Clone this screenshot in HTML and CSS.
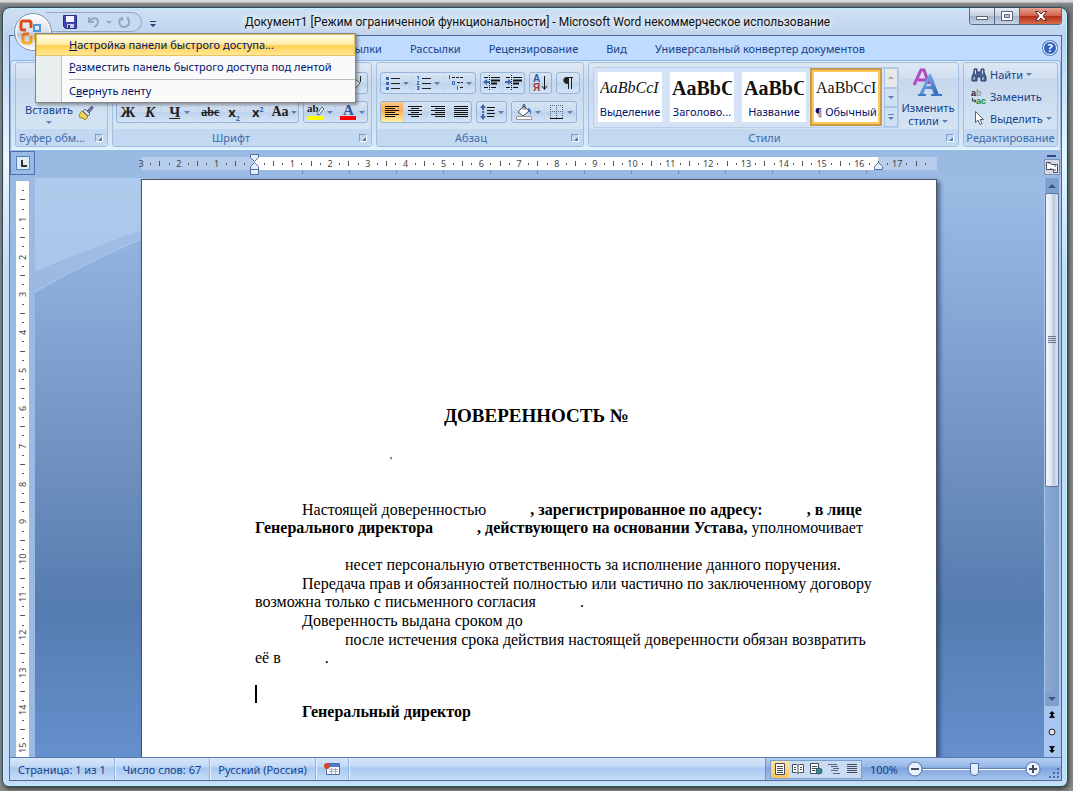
FILE: index.html
```
<!DOCTYPE html>
<html lang="ru">
<head>
  <meta charset="UTF-8" />
  <meta name="viewport" content="width=device-width, initial-scale=1.0"/>
  <title>Документ1 - Microsoft Word</title>
  <link rel="stylesheet" href="styles.css">
</head>
<body>
<div class="window">

  <header class="titlebar">
    <button class="office" aria-label="Кнопка Office">
      <svg width="40" height="40" viewBox="0 0 40 40">
        <defs>
          <linearGradient id="orb" x1="0" y1="0" x2="0" y2="1">
            <stop offset="0" stop-color="#fff"/><stop offset=".5" stop-color="#d9dfe8"/>
            <stop offset=".55" stop-color="#b9c4d3"/><stop offset="1" stop-color="#fff"/>
          </linearGradient>
          <linearGradient id="flame" x1="0" y1="0" x2="0" y2="1">
            <stop offset="0" stop-color="#e86a1c"/><stop offset="1" stop-color="#f5b623"/>
          </linearGradient>
        </defs>
        <circle cx="20" cy="20" r="18.500" fill="url(#orb)" stroke="#7f93b2"/>
        <circle cx="20" cy="20" r="17" fill="none" stroke="#fff"/>
        <g fill="none" stroke-width="3">
          <path d="M13 18h-3q-2 0-2-2v-5q0-2 2-2h6q2 0 2 2v5" stroke="#dc4a20"/>
          <path d="M21 13h6v6h-6z" stroke="#4a9bd8" stroke-width="2"/>
          <path d="M16 22h-4q-2 0-2 2v5q0 2 2 2h4q2 0 2-2v-5" stroke="url(#flame)"/>
          <path d="M22 23h4v4h-4z" stroke="#e9b840" stroke-width="2"/>
        </g>
      </svg>
    </button>
    <div class="quick">
      <button aria-label="Сохранить">
        <svg width="16" height="16" viewBox="0 0 16 16">
          <path d="M1.500 1.500h13v13h-11l-2-2z" fill="#3f46b0" stroke="#2a2f86"/>
          <path d="M4 2h8v6H4z" fill="#f4f6ff"/><path d="M5 10h7v4H5z" fill="#c9cdec"/><path d="M6 11h2v3H6z" fill="#2a2f86"/>
        </svg>
      </button>
      <button aria-label="Отменить">
        <svg width="16" height="16" viewBox="0 0 16 16" fill="none" stroke="#93a9c9" stroke-width="2">
          <path d="M3 3v5h5M3 8c3-5 9-5 9 0 0 3-2 4-4 5"/>
        </svg>
      </button>
      <i class="arrow pale"></i>
      <button aria-label="Повторить">
        <svg width="16" height="16" viewBox="0 0 16 16" fill="none" stroke="#93a9c9" stroke-width="2">
          <path d="M5 4C2 6 3 13 8 13s7-6 3-9M6 3v4M12 3v3"/>
        </svg>
      </button>
    </div>
    <button class="customize" aria-label="Настройка панели"><i class="arrow"></i></button>
    <h1>Документ1 [Режим ограниченной функциональности] - Microsoft Word некоммерческое использование</h1>
    <div class="window-buttons">
      <button aria-label="Свернуть"><svg width="14" height="12" viewBox="0 0 14 12"><path d="M1.500 6.500h11v3h-11z" fill="#fff" stroke="#56657c"/></svg></button>
      <button aria-label="Развернуть"><svg width="14" height="12" viewBox="0 0 14 12"><path d="M1.500 1.500h11v9h-11z" fill="#fff" stroke="#56657c"/><path d="M4.500 4.500h5v3h-5z" fill="#b8c7dd" stroke="#56657c"/></svg></button>
      <button class="close" aria-label="Закрыть"><svg width="14" height="12" viewBox="0 0 14 12"><path d="M1.500 1.500h3l2.500 2.500 2.500-2.500h3L9 6l3.500 4.500h-3L7 8l-2.500 2.500h-3L5 6z" fill="#fff" stroke="#5f2a2a"/></svg></button>
    </div>
  </header>

  <div class="client">
    <nav class="tabs">
      <a href="#">Ссылки</a>
      <a href="#">Рассылки</a>
      <a href="#">Рецензирование</a>
      <a href="#">Вид</a>
      <a href="#">Универсальный конвертер документов</a>
      <button class="help" aria-label="Справка">?</button>
    </nav>

    <div class="ribbon">
      <section class="group clipboard">
        <div class="group-body">
          <button class="paste">Вставить<i class="arrow"></i></button>
          <button class="brush" aria-label="Формат по образцу">
            <svg width="16" height="16" viewBox="0 0 16 16">
              <path d="M14 1l1 2-4 5-2-2z" fill="#6d7fae" stroke="#4a5888"/>
              <path d="M7 4l5 5-2 2-5-5z" fill="#d8deea" stroke="#6a6f80"/>
              <path d="M4 6l6 6-3 3-1-2-1 1-1-2-2 1-1-3z" fill="#f0d860" stroke="#a88a2a"/>
            </svg>
          </button>
        </div>
        <h2>Буфер обм...<button class="launcher" aria-label="Буфер обмена"></button></h2>
      </section>

      <section class="group font">
        <div class="group-body">
          <div class="row end">
            <div class="set"><button class="b24" aria-label="Очистить формат">
              <svg width="18" height="18" viewBox="0 0 18 18"><path d="M3 13l6-8 5 4-6 7H5z" fill="#fff" stroke="#56657c"/><path d="M14.500 2v6" stroke="#222"/></svg>
            </button></div>
          </div>
          <div class="row spread">
            <div class="set">
              <button class="b22 letter"><b>Ж</b></button>
              <button class="b22 letter"><b><i>К</i></b></button>
              <button class="b40 letter"><b><u>Ч</u></b><i class="arrow"></i></button>
              <button class="b24 small-letter"><s>abc</s></button>
              <button class="b24 letter sans"><b>x<sub>2</sub></b></button>
              <button class="b24 letter sans"><b>x<sup>2</sup></b></button>
              <button class="b28 letter bold-aa">Aa<i class="arrow"></i></button>
            </div>
            <div class="set">
              <button class="b32" aria-label="Цвет выделения текста">
                <svg width="18" height="18" viewBox="0 0 18 18"><text x="0" y="9" class="glyph">ab</text><path d="M10 11l5-7 2 2-5 6z" fill="#f4f4f4" stroke="#56657c"/><path d="M1 13h16v4H1z" fill="#ff0"/></svg>
                <i class="arrow"></i>
              </button>
              <button class="b32" aria-label="Цвет текста">
                <svg width="18" height="18" viewBox="0 0 18 18"><text x="4" y="12" class="glyph big">A</text><path d="M1 13h16v4H1z" fill="#f00"/></svg>
                <i class="arrow"></i>
              </button>
            </div>
          </div>
        </div>
        <h2>Шрифт<button class="launcher" aria-label="Шрифт"></button></h2>
      </section>

      <section class="group paragraph">
        <div class="group-body">
          <div class="row">
            <div class="set">
              <button class="b32" aria-label="Маркеры"><svg width="16" height="16" viewBox="0 0 16 16"><path d="M6 3.500h9M6 8.500h9M6 13.500h9" stroke="#222"/><path d="M1 2h3v3H1zM1 7h3v3H1zM1 12h3v3H1z" fill="#3c66b4"/></svg><i class="arrow"></i></button>
              <button class="b32" aria-label="Нумерация"><svg width="16" height="16" viewBox="0 0 16 16"><path d="M6 3.500h9M6 8.500h9M6 13.500h9" stroke="#222"/><path d="M1 1.500h1.500v3M1 6.500h2L1 9.500h2.500M1 11.500h2v3H1m0-1.500h2" stroke="#3c66b4" fill="none"/></svg><i class="arrow"></i></button>
              <button class="b32" aria-label="Многоуровневый список"><svg width="16" height="16" viewBox="0 0 16 16"><path d="M4 2.500h11M9 7.500h6M12 12.500h3" stroke="#222" stroke-dasharray="3 1"/><path d="M1.500 0v4M4.500 6.500h2v3h-2zM9.500 11v4" stroke="#3c66b4" fill="none"/></svg><i class="arrow"></i></button>
            </div>
            <div class="set">
              <button class="b22" aria-label="Уменьшить отступ"><svg width="18" height="16" viewBox="0 0 18 16"><path d="M1 2.500h4M8 2.500h9M1 12.500h4M8 12.500h5" stroke="#111"/><path d="M8 5.500h9M8 8.500h6" stroke="#111" stroke-width="2"/><path d="M6.500 0v16" stroke="#111" stroke-dasharray="1 1"/><path d="M0 7l4-3v2h3v2H4v2z" fill="#3c66b4"/></svg></button>
              <button class="b22" aria-label="Увеличить отступ"><svg width="18" height="16" viewBox="0 0 18 16"><path d="M1 2.500h4M8 2.500h9M1 12.500h4M8 12.500h5" stroke="#111"/><path d="M8 5.500h9M8 8.500h6" stroke="#111" stroke-width="2"/><path d="M6.500 0v16" stroke="#111" stroke-dasharray="1 1"/><path d="M7 7L3 4v2H0v2h3v2z" fill="#3c66b4"/></svg></button>
            </div>
            <div class="set">
              <button class="b22" aria-label="Сортировка"><svg width="18" height="18" viewBox="0 0 18 18"><text x="1" y="8" class="glyph sort">А</text><text x="1" y="17" class="glyph sort red">Я</text><path d="M12.500 2v13M10 12l2.500 3.500L15 12" stroke="#111" fill="none"/></svg></button>
            </div>
            <div class="set">
              <button class="b22" aria-label="Знаки абзаца"><svg width="14" height="14" viewBox="0 0 14 14"><path d="M6 1h6v1h-1v11h-1V2H8v11H7V8C1 8 1 1 6 1z" fill="#222"/></svg></button>
            </div>
          </div>
          <div class="row">
            <div class="set">
              <button class="b22 active" aria-label="По левому краю"><svg width="16" height="14" viewBox="0 0 16 14"><path d="M1 1.500h14M1 3.500h10M1 5.500h14M1 7.500h10M1 9.500h14M1 11.500h10" stroke="#111"/></svg></button>
              <button class="b22" aria-label="По центру"><svg width="16" height="14" viewBox="0 0 16 14"><path d="M1 1.500h14M4 3.500h8M1 5.500h14M4 7.500h8M1 9.500h14M4 11.500h8" stroke="#111"/></svg></button>
              <button class="b24" aria-label="По правому краю"><svg width="16" height="14" viewBox="0 0 16 14"><path d="M1 1.500h14M5 3.500h10M1 5.500h14M5 7.500h10M1 9.500h14M5 11.500h10" stroke="#111"/></svg></button>
              <button class="b22" aria-label="По ширине"><svg width="16" height="14" viewBox="0 0 16 14"><path d="M1 1.500h14M1 3.500h14M1 5.500h14M1 7.500h14M1 9.500h14M1 11.500h14" stroke="#111"/></svg></button>
            </div>
            <div class="set">
              <button class="b28" aria-label="Междустрочный интервал"><svg width="16" height="16" viewBox="0 0 16 16"><path d="M7 3.500h8M7 6.500h7M7 9.500h8M7 12.500h7" stroke="#111"/><path d="M3 0l3 4H4v2H2V4H0zM3 16l3-4H4v-2H2v2H0zM2 7h2v2H2z" fill="#3c66b4"/></svg><i class="arrow"></i></button>
            </div>
            <div class="set">
              <button class="b32" aria-label="Заливка"><svg width="18" height="18" viewBox="0 0 18 18"><path d="M3 9l6-6 5 5-6 5z" fill="#fff" stroke="#444c5c"/><path d="M8 6V2q2-2 2 1v4" stroke="#444c5c" fill="none"/><path d="M13 5q4 1 3 7-1-4-3-4z" fill="#3c66b4"/><path d="M1.500 13.500h15v3h-15z" fill="#fff" stroke="#999"/></svg><i class="arrow"></i></button>
              <button class="b32" aria-label="Границы"><svg width="16" height="16" viewBox="0 0 16 16"><path d="M1 1.500h13M1 7.500h13M1.500 1v13M7.500 1v13M13.500 1v13" stroke="#56657c" stroke-dasharray="1 1"/><path d="M1 14.500h13" stroke="#111"/></svg><i class="arrow"></i></button>
            </div>
          </div>
        </div>
        <h2>Абзац<button class="launcher" aria-label="Абзац"></button></h2>
      </section>

      <section class="group styles">
        <div class="group-body">
          <div class="gallery">
            <button class="style"><span class="sample italic">AaBbCcI</span><span>Выделение</span></button>
            <button class="style"><span class="sample heading">AaBbC</span><span>Заголово...</span></button>
            <button class="style"><span class="sample heading">AaBbC</span><span>Название</span></button>
            <button class="style selected"><span class="sample">AaBbCcI</span><span>¶ Обычный</span></button>
            <div class="gallery-scroll">
              <button aria-label="Вверх" disabled><i class="arrow up"></i></button>
              <button aria-label="Вниз"><i class="arrow"></i></button>
              <button aria-label="Все стили" class="more"><i class="arrow"></i></button>
            </div>
          </div>
          <button class="change">
            <svg width="32" height="32" viewBox="0 0 32 32">
              <defs><linearGradient id="blueA" x1="0" y1="0" x2="1" y2="1"><stop offset="0" stop-color="#8fc0f0"/><stop offset="1" stop-color="#2c63b8"/></linearGradient></defs>
              <path d="M2 18L9 3h3l5 14M6 13h8" fill="none" stroke="#b04cc0" stroke-width="3"/>
              <path d="M7 28L17 7h2l8 21h-5l-2-6h-7l-2 6zM14 19h5l-2-6z" fill="url(#blueA)" fill-rule="evenodd"/>
              <path d="M6 27h8v2H6zM19 27h11v2H19z" fill="#3f78c8"/>
            </svg>
            <span>Изменить<br>стили <i class="arrow"></i></span>
          </button>
        </div>
        <h2>Стили<button class="launcher" aria-label="Стили"></button></h2>
      </section>

      <section class="group editing">
        <div class="group-body">
          <button><svg width="16" height="16" viewBox="0 0 16 16"><path d="M3 2h3v3h4V2h3v3l2 5v4h-5v-4H6v4H1v-4l2-5z" fill="#4a6390" stroke="#2c4270"/><path d="M3 10v3M12 10v3M4.500 3v4M11.500 3v4" stroke="#d6e2f4"/></svg>Найти<i class="arrow"></i></button>
          <button><svg width="16" height="16" viewBox="0 0 16 16"><text x="0" y="7" class="glyph tiny">a<tspan fill="#999">b</tspan></text><text x="5" y="15" class="glyph tiny green">ac</text><path d="M1.500 9v3H5M3.500 10.500L5 12l-1.500 1.500" stroke="#333" fill="none"/></svg>Заменить</button>
          <button><svg width="16" height="16" viewBox="0 0 16 16"><path d="M4.500 1.500v11l2.500-2.500 2 4.500 2-1-2-4h3.500z" fill="#fff" stroke="#56657c"/></svg>Выделить<i class="arrow"></i></button>
        </div>
        <h2>Редактирование</h2>
      </section>
    </div>

    <div class="ruler-row">
      <button class="tab-stop" aria-label="Позиция табуляции"><span></span></button>
      <div class="ruler-track">
        <div class="ruler">
          <ol>
            <li><span>3</span></li><li><span>2</span></li><li><span>1</span></li><li></li>
            <li><span>1</span></li><li><span>2</span></li><li><span>3</span></li><li><span>4</span></li>
            <li><span>5</span></li><li><span>6</span></li><li><span>7</span></li><li><span>8</span></li>
            <li><span>9</span></li><li><span>10</span></li><li><span>11</span></li><li><span>12</span></li>
            <li><span>13</span></li><li><span>14</span></li><li><span>15</span></li><li><span>16</span></li>
            <li><span>17</span></li>
          </ol>
          <svg class="indent first" width="11" height="22" viewBox="0 0 11 22" fill="#e4eefb" stroke="#56719f">
            <path d="M1.500.500h8v3l-4 4-4-4zM5.500 8.500l4 4v3h-8v-3zM1.500 15.500h8v5h-8z"/>
          </svg>
          <svg class="indent last" width="11" height="10" viewBox="0 0 11 10" fill="#e4eefb" stroke="#56719f">
            <path d="M5.500 1.500l4 4v3h-8v-3z"/>
          </svg>
        </div>
      </div>
      <div class="ruler-toggle">
        <button aria-label="Линейка"><svg width="14" height="14" viewBox="0 0 14 14" fill="#fff" stroke="#444c5c"><path d="M1.500 2.500h4l1 2h6v8h-4v-3h-7z"/><path d="M4 2v2M6 8v2M10 5v2M9 10h2"/></svg></button>
      </div>
    </div>

    <div class="workspace">
      <div class="v-ruler">
        <ol>
          <li></li><li><span>1</span></li><li><span>2</span></li><li><span>3</span></li>
          <li><span>4</span></li><li><span>5</span></li><li><span>6</span></li><li><span>7</span></li>
          <li><span>8</span></li><li><span>9</span></li><li><span>10</span></li><li><span>11</span></li>
          <li><span>12</span></li><li><span>13</span></li><li><span>14</span></li><li><span>15</span></li>
        </ol>
      </div>
      <main class="desk">
        <svg class="swoosh" width="120" height="120" viewBox="0 0 120 120">
          <path d="M0 0h120v48Q50 72 0 94z" fill="#b9d3f0" opacity=".65"/>
          <path d="M0 94Q50 72 120 48v8Q55 82 0 114z" fill="#a9c6ea" opacity=".5"/>
          <path d="M0 114Q55 82 120 55" fill="none" stroke="#b4cfef" stroke-width="2" opacity=".4"/>
        </svg>
        <article class="page">
          <h3>ДОВЕРЕННОСТЬ №</h3>
          <p class="mark">,</p>
          <p class="indented">Настоящей доверенностью<span class="blank"></span><b>, зарегистрированное по адресу:<span class="blank"></span>, в лице<br>Генерального директора<span class="blank"></span>, действующего на основании Устава,</b> уполномочивает<br>&nbsp;</p>
          <p class="deep">несет персональную ответственность за исполнение данного поручения.</p>
          <p class="indented">Передача прав и обязанностей полностью или частично по заключенному договору<br>возможна только с письменного согласия<span class="blank"></span>.</p>
          <p class="indented">Доверенность выдана сроком до</p>
          <p class="deep">после истечения срока действия настоящей доверенности обязан возвратить<br>её в<span class="blank"></span>.</p>
          <div class="caret"></div>
          <p class="indented"><b>Генеральный директор</b></p>
        </article>
      </main>
      <div class="scrollbar">
        <button class="step" aria-label="Вверх"><i class="arrow up"></i></button>
        <div class="track"><div class="thumb"></div></div>
        <button class="step" aria-label="Вниз"><i class="arrow"></i></button>
        <button class="browse" aria-label="Предыдущая страница"><svg width="8" height="8" viewBox="0 0 8 8"><path d="M4 0l3 3H5v1l2 3H1l2-3V3H1z"/></svg></button>
        <button class="browse" aria-label="Выбор объекта перехода"><svg width="8" height="8" viewBox="0 0 8 8"><circle cx="4" cy="4" r="3" fill="#dde3ec" stroke="#222"/></svg></button>
        <button class="browse" aria-label="Следующая страница"><svg width="8" height="8" viewBox="0 0 8 8"><path d="M4 8l3-3H5V4l2-3H1l2 3v1H1z"/></svg></button>
      </div>
    </div>

    <footer class="status">
      <button>Страница: 1 из 1</button>
      <button>Число слов: 67</button>
      <button>Русский (Россия)</button>
      <button class="macro" aria-label="Запись макроса"><svg width="16" height="14" viewBox="0 0 16 14"><path d="M2.500 1.500h13v11h-13z" fill="#fff" stroke="#4f6ea8"/><path d="M3 2h12v3H3z" fill="#4d79cf"/><path d="M5 7.500h9M5 9.500h9M7.500 6v6M11.500 6v6" stroke="#9fb0cc"/><circle cx="3" cy="4" r="3" fill="#d8452c"/></svg></button>
      <div class="status-right">
        <div class="views">
          <button class="active" aria-label="Разметка страницы"><svg width="14" height="12" viewBox="0 0 14 12"><path d="M2.500.500h9v11h-9z" fill="#fff" stroke="#444c5c"/><path d="M4 3.500h6M4 5.500h6M4 7.500h6M4 9.500h6" stroke="#444c5c"/></svg></button>
          <button aria-label="Режим чтения"><svg width="14" height="12" viewBox="0 0 14 12"><path d="M1.500 1.500h4l1.500 1 1.500-1h4v8h-4l-1.500 1-1.500-1h-4zM7 2v8" fill="#fff" stroke="#444c5c"/><path d="M3 4.500h2M3 6.500h2M9 4.500h2M9 6.500h2" stroke="#444c5c"/></svg></button>
          <button aria-label="Веб-документ"><svg width="14" height="12" viewBox="0 0 14 12"><path d="M1.500.500h8v10h-8z" fill="#fff" stroke="#444c5c"/><path d="M3 3.500h5M3 5.500h5M3 7.500h3" stroke="#444c5c"/><circle cx="10" cy="8" r="3" fill="#3f8a6c" stroke="#2c5c80"/></svg></button>
          <button aria-label="Структура"><svg width="14" height="12" viewBox="0 0 14 12"><path d="M1 1.500h9M4 3.500h7M6 5.500h6M4 7.500h7M6 10.500h7" stroke="#56657c"/></svg></button>
          <button aria-label="Черновик"><svg width="14" height="12" viewBox="0 0 14 12"><path d="M2 1.500h10M2 3.500h10M2 5.500h10M2 7.500h10M2 9.500h10" stroke="#444c5c"/></svg></button>
        </div>
        <button class="percent">100%</button>
        <div class="zoom">
          <button class="round" aria-label="Уменьшить"><svg width="16" height="16" viewBox="0 0 16 16"><circle cx="8" cy="8" r="7" fill="#eaf2fd" stroke="#4f6ea8"/><path d="M4 8h8" stroke="#444c5c" stroke-width="2"/></svg></button>
          <input type="range" min="0" max="100" value="50" aria-label="Масштаб">
          <button class="round" aria-label="Увеличить"><svg width="16" height="16" viewBox="0 0 16 16"><circle cx="8" cy="8" r="7" fill="#eaf2fd" stroke="#4f6ea8"/><path d="M4 8h8M8 4v8" stroke="#444c5c" stroke-width="2"/></svg></button>
        </div>
        <svg class="grip" width="12" height="12" viewBox="0 0 12 12" fill="#4a6ca8"><path d="M9 1h2v2H9zM9 5h2v2H9zM5 5h2v2H5zM9 9h2v2H9zM5 9h2v2H5zM1 9h2v2H1z"/></svg>
      </div>
    </footer>
  </div>

  <div class="menu" role="menu">
    <button class="hover" role="menuitem"><span><u>Н</u>астройка панели быстрого доступа...</span></button>
    <button role="menuitem"><span><u>Р</u>азместить панель быстрого доступа под лентой</span></button>
    <hr>
    <button role="menuitem"><span>С<u>в</u>ернуть ленту</span></button>
  </div>
</div>
</body>
</html>
```
FILE: styles.css
```
* {
  box-sizing: border-box;
}
body {
  margin: 0;
  height: 100vh;
  padding: 7px 5px 4px 2px;
  background: linear-gradient(#d8d8da 0, #d8d8da 2px, #8d8f92 3px, #77797c 7px, #8a8a8a 60px, #8a8a8a);
  font-family: "Noto Sans", "Open Sans", sans-serif;
  font-size: 11px;
  color: #15428b;
  overflow: hidden;
}
button {
  margin: 0;
  padding: 0;
  border: none;
  background: none;
  font: inherit;
  color: inherit;
}
svg {
  flex-shrink: 0;
}
h1, h2, h3, p, ol {
  margin: 0;
  padding: 0;
  font-weight: normal;
}

/* window frame */
.window {
  position: relative;
  display: flex;
  flex-direction: column;
  height: 100%;
  padding: 0 5px 5px 6px;
  border: 1px solid #2b4a5e;
  border-radius: 8px 8px 7px 7px;
  background: linear-gradient(#cfe0f4, #bcd2ec 30px, #eef6fe 150px, #c4dcf6 260px, #c4dcf6);
  box-shadow: inset 0 0 0 1px #b9f2fb, 1px 2px 4px rgba(0,0,0,0.6);
}
.titlebar {
  position: relative;
  display: flex;
  align-items: flex-start;
  height: 27px;
  flex-shrink: 0;
}
.titlebar h1 {
  flex: 1;
  padding: 0 58px 0 0;
  text-align: center;
  font-family: Roboto, sans-serif;
  font-size: 12px;
  line-height: 28px;
  color: #111;
  white-space: nowrap;
  overflow: hidden;
  text-shadow: 0 0 8px #fff, 0 0 8px #fff;
}
.office {
  position: absolute;
  left: 4px;
  top: 4px;
  z-index: 2;
}
.office svg {
  display: block;
}
.quick {
  display: flex;
  align-items: center;
  gap: 4px;
  width: 96px;
  height: 20px;
  margin: 4px 0 0 37px;
  padding-left: 16px;
  border: 1px solid #8fa9cc;
  border-left: none;
  border-radius: 0 10px 10px 0;
  background: #c9dbf0;
}
.quick button {
  display: flex;
}
.quick button + button {
  margin-left: 4px;
}
.customize {
  height: 28px;
  padding: 0 8px;
}
.customize .arrow {
  position: relative;
  border-top-color: #24407a;
}
.customize .arrow::before {
  content: "";
  position: absolute;
  left: -3px;
  top: -6px;
  width: 6px;
  height: 1px;
  background: #24407a;
}
.window-buttons {
  display: flex;
  height: 17px;
  border: 1px solid #5a6b80;
  border-top: none;
  border-radius: 0 0 4px 4px;
  overflow: hidden;
}
.window-buttons button {
  display: flex;
  align-items: center;
  justify-content: center;
  width: 25px;
  border-right: 1px solid #5a6b80;
  background: linear-gradient(#e3ebf5, #c3cfdf 50%, #a4b4ca 50%, #c5d5e8);
}
.window-buttons .close {
  width: 41px;
  border-right: none;
  background: linear-gradient(#e8a493, #d0604a 50%, #b02c16 50%, #d86a48);
}

.arrow {
  display: inline-block;
  flex-shrink: 0;
  width: 0;
  height: 0;
  border: 3px solid transparent;
  border-top-color: #5f7fb0;
  border-bottom: none;
}
.arrow.up {
  border-top: none;
  border-bottom: 3px solid #5f7fb0;
}
.arrow.pale {
  border-top-color: #93a9c9;
}

.client {
  display: flex;
  flex-direction: column;
  flex: 1;
  min-height: 0;
  border: 1px solid #4b6a96;
  background: #bfdbff;
}

/* tabs */
.tabs {
  display: flex;
  align-items: center;
  height: 24px;
  flex-shrink: 0;
  padding: 0 4px 0 318px;
}
.tabs a {
  padding: 0 14px;
  color: #15428b;
  text-decoration: none;
  white-space: nowrap;
}
.help {
  width: 14px;
  height: 14px;
  margin-left: auto;
  border: 1px solid #fff;
  border-radius: 50%;
  background: #2f62c4;
  box-shadow: 0 0 0 1px #5a82bd;
  color: #fff;
  font-weight: bold;
  line-height: 12px;
}

/* ribbon */
.ribbon {
  display: flex;
  gap: 4px;
  height: 90px;
  flex-shrink: 0;
  padding: 1px 2px 2px 4px;
  border: 1px solid #8db2e3;
  border-bottom-color: #e0fbff;
  border-radius: 4px;
  background: linear-gradient(#dbe7f5, #cfdff1 15px, #c6d9ee 20px, #d9e8f8 85px, #e0f6ff);
}
.group {
  display: flex;
  flex-direction: column;
  flex-shrink: 0;
  border: 1px solid #a3c0e0;
  border-radius: 3px;
  background: linear-gradient(#dee8f5, #d1dff0 15px, #c7d8ed 16px, #d8e8f5);
  overflow: hidden;
}
.group h2 {
  position: relative;
  height: 17px;
  padding-right: 18px;
  background: #c2d9f1;
  color: #3e6aaa;
  font-size: 11px;
  line-height: 17px;
  text-align: center;
  white-space: nowrap;
}
.group-body {
  flex: 1;
  min-height: 0;
}
.launcher {
  position: absolute;
  right: 4px;
  top: 5px;
  width: 8px;
  height: 8px;
  border: 1px solid #7c9cc7;
  border-right-color: #fff;
  border-bottom-color: #fff;
}
.launcher::after {
  content: "";
  position: absolute;
  right: 0;
  bottom: 0;
  border: 2px solid #5276ab;
  border-top-color: transparent;
  border-left-color: transparent;
}
.clipboard {
  width: 93px;
}
.group.clipboard h2 {
  padding: 0 0 0 3px;
  text-align: left;
}
.clipboard .group-body {
  display: flex;
  align-items: flex-end;
  gap: 5px;
  padding: 0 0 5px 9px;
}
.paste {
  display: flex;
  flex-direction: column;
  align-items: center;
  gap: 4px;
}
.font {
  width: 260px;
}
.font h2 {
  padding-right: 22px;
}
.paragraph {
  width: 208px;
}
.font .group-body,
.paragraph .group-body {
  display: flex;
  flex-direction: column;
  gap: 7px;
  padding: 9px 3px 0 3px;
}
.row {
  display: flex;
  gap: 4px;
}
.row.end {
  justify-content: flex-end;
}
.row.spread {
  justify-content: space-between;
}
.set {
  display: flex;
  height: 22px;
  border: 1px solid #97b3d8;
  border-radius: 3px;
  background: linear-gradient(#d8e5f5, #c7d9ef 50%, #bcd1ea 50%, #d3e4f7);
  overflow: hidden;
}
.set button {
  display: flex;
  align-items: center;
  justify-content: center;
  gap: 2px;
  color: #222;
}
.set button + button {
  border-left: 1px solid #c3d6ee;
}
.set .active {
  background: linear-gradient(#fbc98a, #fdab4e 45%, #fdc468 60%, #fff0a5);
}
.b22 { width: 22px; }
.b24 { width: 24px; }
.b28 { width: 29px; }
.b32 { width: 32px; }
.b40 { width: 38px; }
.letter {
  font-family: "Liberation Serif", serif;
  font-size: 15px;
}
.letter .arrow {
  margin-left: 2px;
}
.letter.sans {
  font-family: "Noto Sans", sans-serif;
  font-size: 13px;
}
.letter.bold-aa {
  font-size: 14px;
  font-weight: bold;
}
.bold-aa .arrow {
  margin-left: 0;
}
.letter sub,
.letter sup {
  font-size: 7px;
  line-height: 1;
  color: #3c66b4;
}
.small-letter {
  font-family: "Liberation Serif", serif;
  font-size: 12px;
  font-weight: bold;
}
.glyph {
  font-family: "Liberation Serif", serif;
  font-size: 11px;
  font-weight: bold;
  fill: #222;
}
.glyph.big {
  font-size: 15px;
  fill: #33559a;
}
.glyph.sort {
  font-family: "Liberation Sans", sans-serif;
  font-size: 10px;
  fill: #33559a;
}
.glyph.sort.red {
  fill: #a33a3a;
}
.glyph.tiny {
  font-family: "Liberation Sans", sans-serif;
  font-size: 9px;
}
.glyph.green {
  fill: #1c8a2c;
}

.styles {
  flex: 1;
}
.styles .group-body {
  display: flex;
  justify-content: space-between;
  padding: 4px 1px 1px 4px;
}
.gallery {
  display: flex;
  gap: 8px;
  padding: 4px 0 5px 4px;
  border: 1px solid #b4cdea;
  border-radius: 2px;
  background: #d4e4f6;
}
.style {
  display: flex;
  flex-direction: column;
  align-items: center;
  width: 64px;
  background: #fff;
  color: #00156e;
  line-height: 16px;
  white-space: nowrap;
}
.style.selected {
  outline: 2px solid #fbc85a;
  box-shadow: 0 0 0 4px #c99b48;
}
.sample {
  width: 60px;
  height: 32px;
  font-family: "Liberation Serif", serif;
  font-size: 16px;
  line-height: 32px;
  color: #111;
  text-align: left;
  overflow: hidden;
}
.sample.italic {
  font-style: italic;
}
.sample.heading {
  font-size: 20px;
  font-weight: bold;
}
.gallery-scroll {
  display: flex;
  flex-direction: column;
  width: 14px;
  margin: -4px 0 -5px -2px;
}
.gallery-scroll button {
  display: flex;
  align-items: center;
  justify-content: center;
  flex: 1;
  border: 1px solid #aac4e4;
  background: #cfe0f4;
}
.gallery-scroll button:disabled {
  background: #e8e8ea;
}
.gallery-scroll button:disabled .arrow {
  border-bottom-color: #aaa;
}
.gallery-scroll .more {
  flex-direction: column;
  gap: 2px;
}
.gallery-scroll .more::before {
  content: "";
  width: 6px;
  height: 1px;
  background: #5f7fb0;
}
.change {
  display: flex;
  flex-direction: column;
  align-items: center;
  width: 62px;
  line-height: 13px;
}
.change span {
  margin-top: 2px;
}
.change .arrow {
  margin-bottom: 2px;
}

.editing {
  width: 95px;
}
.group.editing h2 {
  padding: 0;
}
.editing .group-body {
  display: flex;
  flex-direction: column;
  align-items: flex-start;
  padding: 1px 0 0 7px;
}
.editing .group-body button {
  display: flex;
  align-items: center;
  gap: 3px;
  height: 22px;
}

/* rulers */
.ruler-row {
  display: flex;
  height: 28px;
  flex-shrink: 0;
  background: #9bbae3;
}
.tab-stop {
  display: flex;
  align-items: center;
  justify-content: center;
  width: 25px;
  height: 24px;
  margin-top: 1px;
  border: 1px solid #4b6fae;
}
.tab-stop span {
  width: 14px;
  height: 14px;
  border: 1px solid #5a82bd;
  background:
    linear-gradient(#333, #333) 4px 3px / 2px 6px no-repeat,
    linear-gradient(#333, #333) 4px 8px / 6px 2px no-repeat,
    #dfeafa;
}
.ruler-track {
  flex: 1;
  display: flex;
  justify-content: center;
  min-width: 0;
  padding: 7px 1px 0 0;
}
.ruler {
  position: relative;
  width: 796px;
  height: 18px;
  background:
    repeating-linear-gradient(90deg, #6a86b3 0, #6a86b3 1px, transparent 1px, transparent 47px) 161px 14px / 573px 3px no-repeat,
    linear-gradient(90deg, #b6cdeb 113px, #fff 113px, #fff 737px, #b6cdeb 737px) 0 0 / 100% 13px no-repeat;
}
.ruler ol {
  display: grid;
  grid-template-columns: repeat(21, 1fr);
  width: 794px;
  height: 13px;
  list-style: none;
}
.ruler li {
  background:
    linear-gradient(#555, #555) 25% 6px / 1px 2px no-repeat,
    linear-gradient(#555, #555) 50% 4px / 1px 5px no-repeat,
    linear-gradient(#555, #555) 75% 6px / 1px 2px no-repeat;
}
.ruler li span {
  display: block;
  width: 16px;
  margin-left: -8px;
  text-align: center;
  font-size: 9px;
  line-height: 13px;
  color: #444;
}
.indent {
  position: absolute;
}
.indent.first {
  left: 108px;
  top: -3px;
}
.indent.last {
  left: 732px;
  top: 4px;
}
.ruler-toggle {
  width: 17px;
  padding-top: 5px;
}
.ruler-toggle::before {
  content: "";
  display: block;
  width: 9px;
  height: 2px;
  margin: 0 0 2px 3px;
  background: #2b4a86;
}
.ruler-toggle button {
  display: flex;
  align-items: center;
  justify-content: center;
  width: 16px;
  height: 16px;
  border: 1px solid #7d8fb0;
  background: #d3d9e6;
}

/* document area */
.workspace {
  display: flex;
  flex: 1;
  min-height: 0;
  background: linear-gradient(#9dbce5, #8babd9 110px, #6a8dbd 310px, #557cb0 430px, #6590cd);
}
.v-ruler {
  width: 25px;
  padding: 3px 6px 0 6px;
  background: #9bbae3;
  overflow: hidden;
}
.v-ruler ol {
  display: grid;
  grid-template-rows: repeat(16, 1fr);
  height: 605px;
  background: #fff;
  list-style: none;
}
.v-ruler li {
  background:
    linear-gradient(#555, #555) 6px 25% / 2px 1px no-repeat,
    linear-gradient(#555, #555) 4px 50% / 5px 1px no-repeat,
    linear-gradient(#555, #555) 6px 75% / 2px 1px no-repeat;
}
.v-ruler li span {
  display: block;
  width: 13px;
  height: 16px;
  margin-top: -8px;
  writing-mode: vertical-rl;
  transform: rotate(180deg);
  text-align: center;
  font-size: 9px;
  line-height: 13px;
  color: #444;
}
.desk {
  position: relative;
  display: flex;
  justify-content: center;
  flex: 1;
  min-width: 0;
  padding: 1px 1px 0 0;
  overflow: hidden;
}
.swoosh {
  position: absolute;
  left: 0;
  top: 0;
}
.page {
  position: relative;
  width: 796px;
  padding: 225px 40px 0 113px;
  border: 1px solid #48546a;
  border-bottom: none;
  background: #fff;
  box-shadow: 3px 2px 4px rgba(30,50,90,0.6);
  font-family: "Liberation Serif", serif;
  font-size: 16px;
  line-height: 18px;
  color: #000;
  white-space: nowrap;
}
.page h3 {
  padding-left: 189px;
  font-size: 19px;
  font-weight: bold;
  line-height: 22px;
}
.page p {
  margin-bottom: 1px;
}
.page .mark {
  margin: 20px 0 36px;
  padding-left: 135px;
  font-size: 8px;
  font-weight: bold;
}
.indented {
  text-indent: 47px;
}
.deep {
  text-indent: 90px;
}
.blank {
  display: inline-block;
  width: 44px;
}
.caret {
  width: 2px;
  height: 18px;
  margin-top: 18px;
  background: #000;
}

.scrollbar {
  display: flex;
  flex-direction: column;
  width: 17px;
  padding: 0 2px 0 1px;
  background: #a8c6ef;
}
.scrollbar button {
  display: flex;
  align-items: center;
  justify-content: center;
}
.step {
  height: 15px;
  background: #7f9fcc;
}
.step .arrow {
  border-width: 4px;
  border-top-color: #3b5686;
  border-bottom: none;
}
.step .arrow.up {
  border-top: none;
  border-bottom: 4px solid #3b5686;
}
.track {
  flex: 1;
  background: linear-gradient(90deg, #8ca9d3, #7d9bc8);
}
.thumb {
  display: flex;
  align-items: center;
  justify-content: center;
  height: 59%;
  border: 1px solid #5c779f;
  border-radius: 2px;
  background: linear-gradient(90deg, #f3f6fb, #dfe6f1 45%, #b9c7dc 60%, #dbe4f0);
}
.thumb::before {
  content: "";
  width: 8px;
  height: 8px;
  background: repeating-linear-gradient(#6b7890 0, #6b7890 1px, transparent 1px, transparent 2px);
}
.browse {
  height: 17px;
}

/* status bar */
.status {
  display: flex;
  align-items: center;
  height: 23px;
  flex-shrink: 0;
  border-top: 1px solid #567db1;
  background: linear-gradient(#d8e7fb, #c0d7f5 40%, #a9c8f0 45%, #c6dcf8);
}
.status > button {
  height: 100%;
  padding: 0 8px;
  border-right: 1px solid #8fb0dc;
  box-shadow: 1px 0 0 #e6f1ff;
}
.status .macro {
  display: flex;
  align-items: center;
}
.status-right {
  display: flex;
  align-items: center;
  height: 100%;
  margin-left: auto;
  padding-left: 4px;
  border-left: 1px solid #6f95cc;
  background: linear-gradient(#b4cef2, #95b6e6 40%, #7fa4dc 45%, #a5c3ee);
}
.views {
  display: flex;
  height: 19px;
  border: 1px solid #7f9fcb;
  background: #c9dcf4;
}
.views button {
  display: flex;
  align-items: center;
  justify-content: center;
  width: 18px;
}
.views .active {
  background: linear-gradient(#fde3a8, #fbc55c);
}
.zoom {
  display: flex;
  align-items: center;
}
.percent {
  margin: 0 9px 0 8px;
}
.round {
  display: flex;
}
.zoom input {
  width: 102px;
  height: 16px;
  margin: 0;
  appearance: none;
  background: linear-gradient(#5d82b8, #5d82b8) 0 7px / 100% 1px no-repeat, linear-gradient(#fff, #fff) 0 8px / 100% 1px no-repeat;
}
.zoom input::-webkit-slider-thumb {
  appearance: none;
  width: 9px;
  height: 13px;
  border: 1px solid #4f6ea8;
  border-radius: 1px 1px 5px 5px;
  background: #e4eefb;
}
.grip {
  align-self: flex-end;
  margin: 0 1px 1px 7px;
}

/* drop-down over the ribbon */
.menu {
  position: absolute;
  left: 32px;
  top: 25px;
  z-index: 3;
  width: 321px;
  border: 1px solid #868686;
  background: linear-gradient(90deg, #e9eeee 25px, #c5c5c5 25px, #c5c5c5 26px, #fafafa 26px);
  box-shadow: 2px 2px 3px rgba(0,0,0,0.35);
  color: #00156e;
}
.menu button {
  display: block;
  width: 100%;
  height: 22px;
  padding-left: 32px;
  border: 1px solid transparent;
  line-height: 18px;
  text-align: left;
}
.menu .hover {
  border-color: #e5c365;
  background: linear-gradient(#fffbe8, #ffe9a0 50%, #ffd04f 50%, #ffe694);
}
.menu hr {
  height: 1px;
  margin: 1px 0 0 33px;
  border: none;
  background: #b9bcc0;
}
```
